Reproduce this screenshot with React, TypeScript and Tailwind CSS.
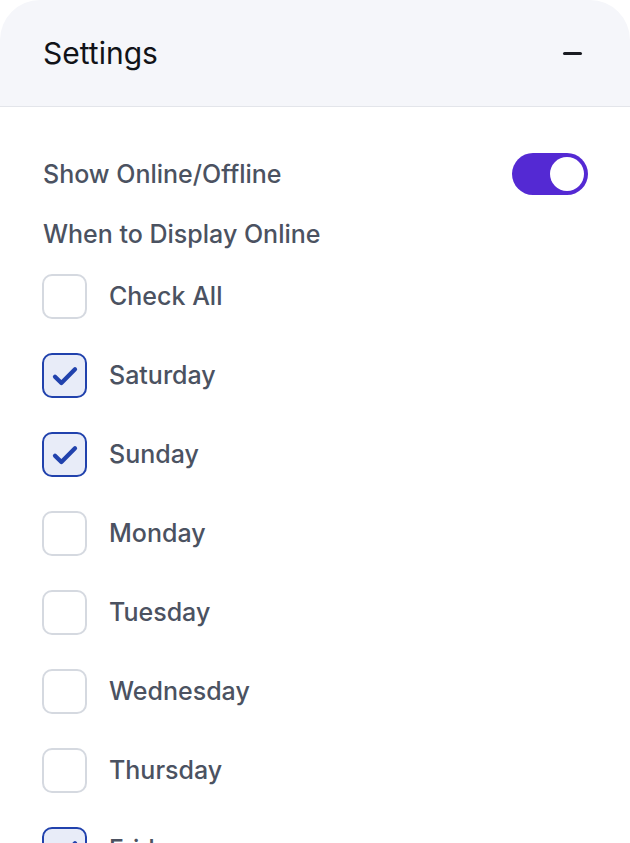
import { useState } from "react";

const days = [
  { label: "Check All", checked: false },
  { label: "Saturday", checked: true },
  { label: "Sunday", checked: true },
  { label: "Monday", checked: false },
  { label: "Tuesday", checked: false },
  { label: "Wednesday", checked: false },
  { label: "Thursday", checked: false },
  { label: "Friday", checked: true },
];

function CheckBox({ checked }: { checked: boolean }) {
  return (
    <span
      className={
        checked
          ? "flex h-[45px] w-[45px] shrink-0 items-center justify-center rounded-[10px] border-[2.5px] border-[#2142ad] bg-[#e8ecf8]"
          : "flex h-[45px] w-[45px] shrink-0 items-center justify-center rounded-[10px] border-[2.5px] border-[#d5d9e0] bg-white"
      }
    >
      {checked && (
        <svg width="32" height="32" viewBox="0 0 24 24" fill="none">
          <path
            d="M4.5 12.5l4.8 4.8L19.5 7"
            stroke="#2142ad"
            strokeWidth="3.2"
            strokeLinecap="round"
            strokeLinejoin="round"
          />
        </svg>
      )}
    </span>
  );
}

export default function App() {
  const [online, setOnline] = useState(true);

  return (
    <div className="h-[843px] w-[630px] overflow-hidden bg-white font-['Inter',sans-serif]">
      <div className="overflow-hidden rounded-t-[40px]">
        {/* Header */}
        <div className="flex h-[107px] items-center justify-between border-b border-[#e3e5ea] bg-[#f5f6fa] pl-[43px] pr-[48px]">
          <h2 className="text-[30px] font-normal leading-none text-[#111318]">Settings</h2>
          <span className="block h-[3px] w-[19px] rounded-sm bg-[#1a1c22]" />
        </div>

        {/* Body */}
        <div className="flex flex-col pl-[42px] pr-[42px] pt-[46px]">
          <div className="flex h-[42px] items-center justify-between">
            <span className="pl-px text-[25px] font-medium leading-none text-[#4b5261]">Show Online/Offline</span>
            <button
              onClick={() => setOnline(!online)}
              className="flex h-[42px] w-[76px] items-center rounded-full bg-[#5429d3] p-1"
            >
              <span className={online ? "ml-auto h-[34px] w-[34px] rounded-full bg-white" : "h-[34px] w-[34px] rounded-full bg-white"} />
            </button>
          </div>

          <div className="mt-[22px] pl-px text-[25px] font-medium leading-[34px] text-[#4b5261]">When to Display Online</div>

          <div className="mt-[23px] flex flex-col gap-[34px]">
            {days.map((d) => (
              <label key={d.label} className="flex items-center gap-[22px]">
                <CheckBox checked={d.checked} />
                <span className="text-[25px] font-medium leading-none text-[#4b5261]">{d.label}</span>
              </label>
            ))}
          </div>
        </div>
      </div>
    </div>
  );
}
